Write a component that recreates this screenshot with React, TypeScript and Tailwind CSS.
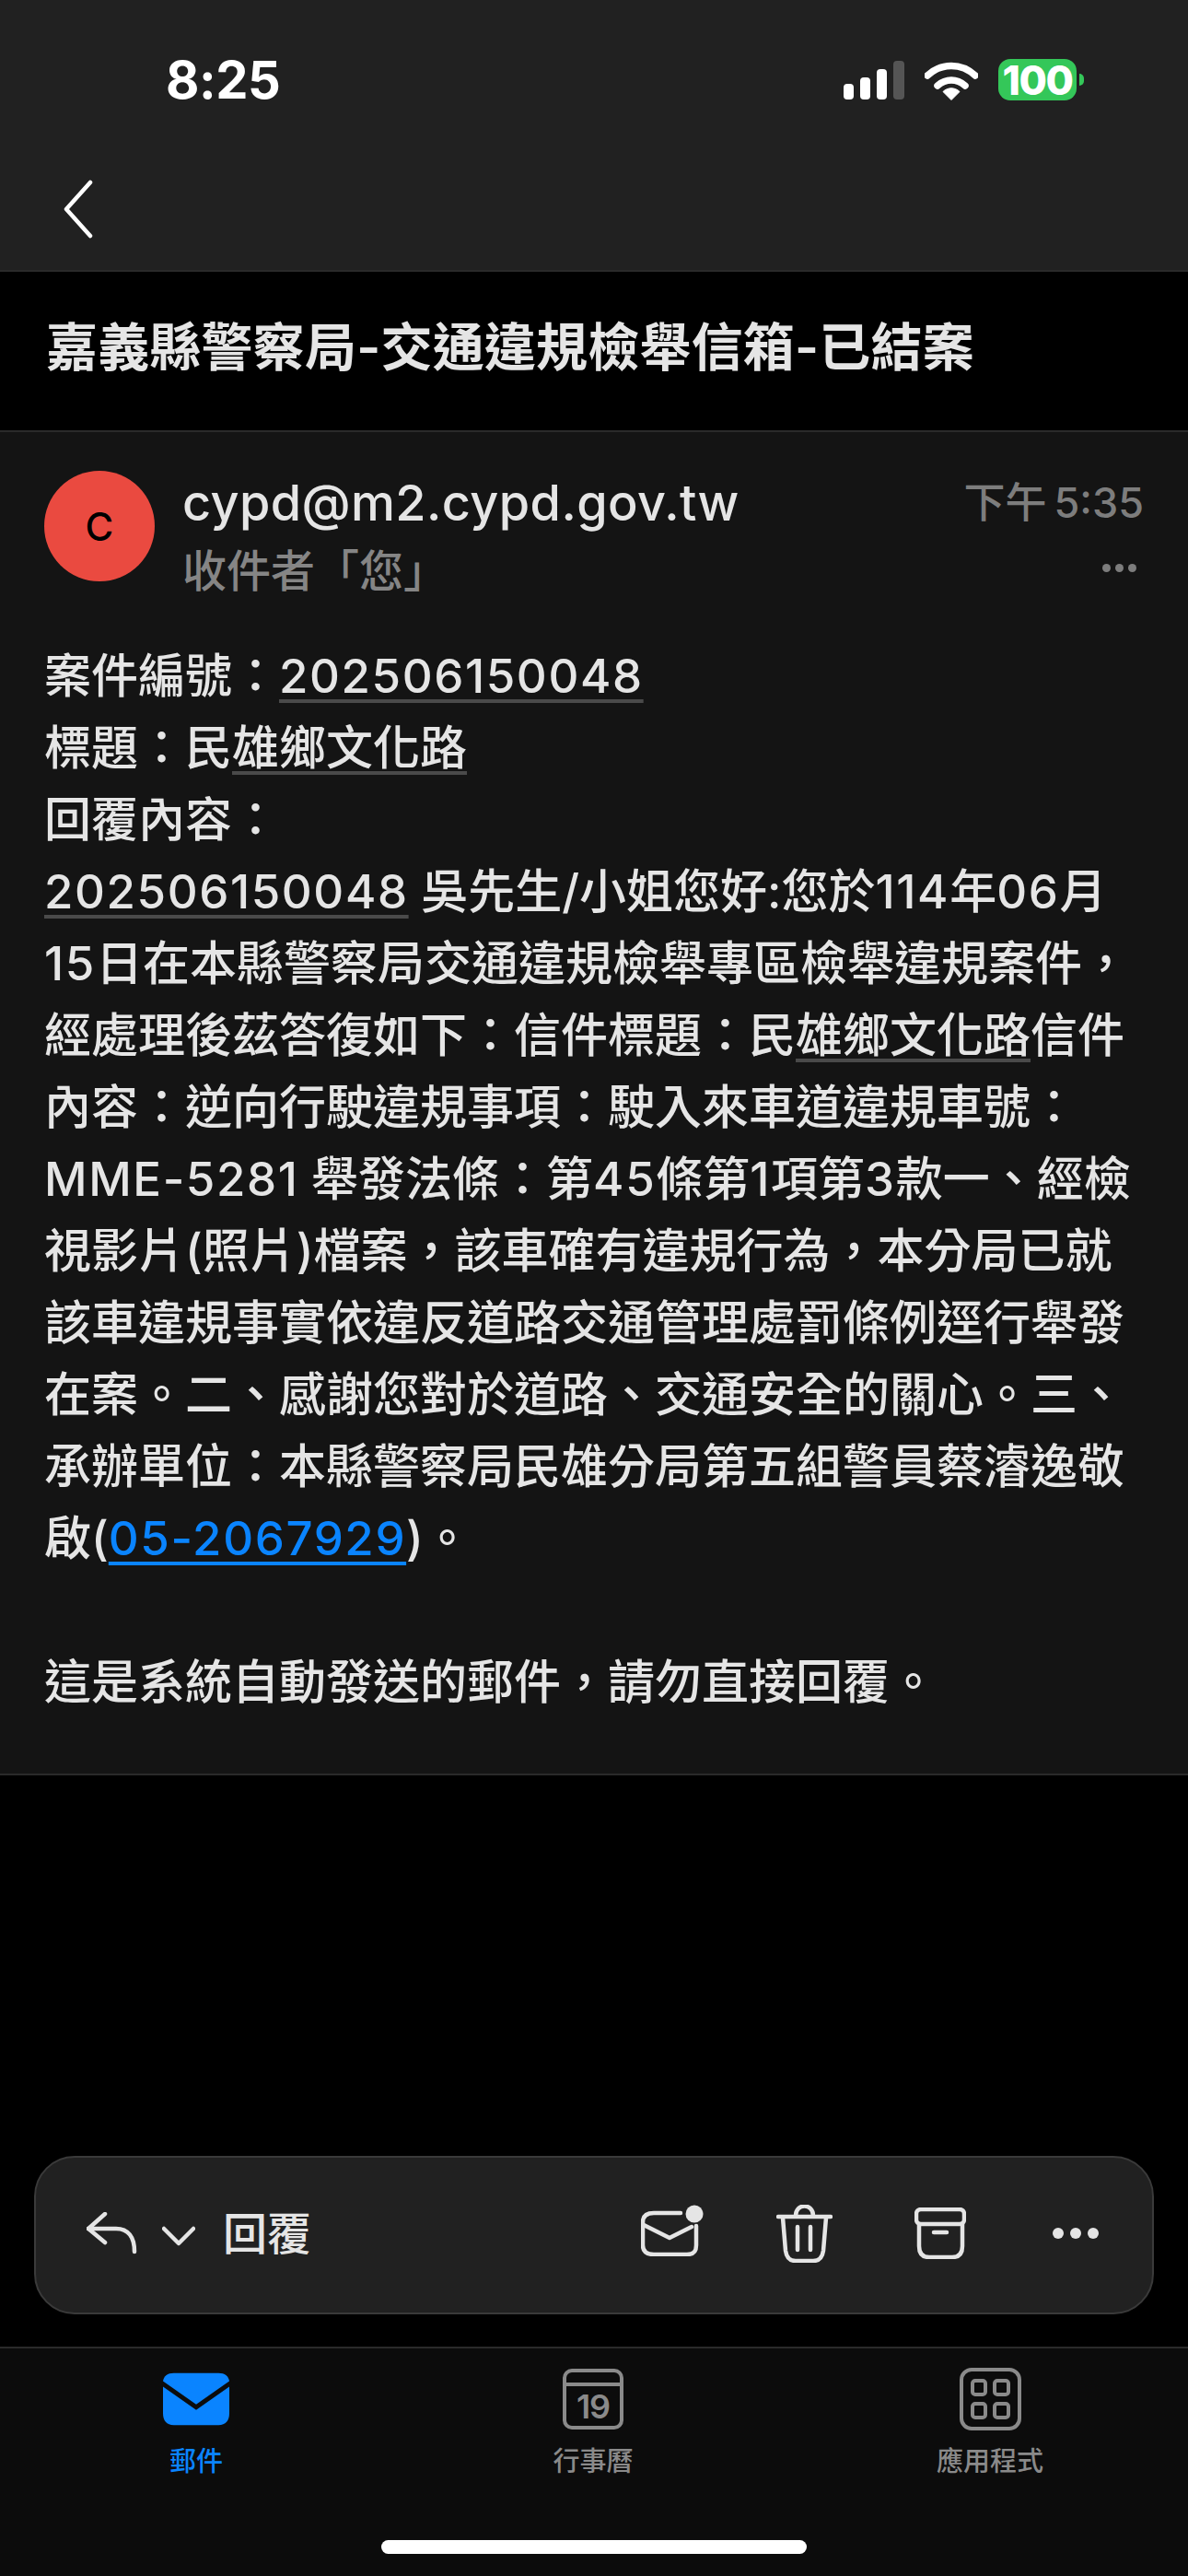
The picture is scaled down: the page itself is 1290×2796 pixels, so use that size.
const cjk = "font-['Inter','Noto_Sans_CJK_TC',sans-serif]";

const underlined = "underline decoration-[#4a4a4a] decoration-[4px] underline-offset-[7px] [text-decoration-skip-ink:none]";

// digits in the reference run wider than Inter
function Num({ children }: { children: React.ReactNode }) {
  return <span className="tracking-[1.6px]">{children}</span>;
}

function StatusIcons() {
  return (
    <div className="flex items-center">
      <svg width="66" height="42" viewBox="0 0 66 42" className="mr-[22px]">
        <rect x="0" y="25" width="11" height="17" rx="4" fill="#fff" />
        <rect x="18" y="18" width="11" height="24" rx="4" fill="#fff" />
        <rect x="36" y="9" width="11" height="33" rx="4" fill="#fff" />
        <rect x="54" y="0" width="12" height="42" rx="4" fill="#555" />
      </svg>
      <svg width="58" height="44" viewBox="0 0 58 44" className="mr-[22px]">
        <path d="M3 17C18 3 40 3 55 17" fill="none" stroke="#fff" strokeWidth="7.5" strokeLinecap="round" />
        <path d="M14 28C23 20 35 20 44 28" fill="none" stroke="#fff" strokeWidth="7.5" strokeLinecap="round" />
        <path d="M20 34.5C25 29.5 33 29.5 38 34.5L29 43.5Z" fill="#fff" stroke="#fff" strokeWidth="1" strokeLinejoin="round" />
      </svg>
      <div className="flex items-center">
        <div className="flex h-[45px] w-[85px] items-center justify-center rounded-[13px] bg-[#34c759] font-['Inter',sans-serif] text-[44px] font-extrabold tracking-[-1.5px] text-white">
          100
        </div>
        <div className="ml-[3px] h-[13px] w-[5px] rounded-r-full bg-[#34c759]" />
      </div>
    </div>
  );
}

function ToolbarIcons() {
  return (
    <div className="flex items-center">
      {/* unread */}
      <svg width="68" height="56" viewBox="0 0 68 56" fill="none" stroke="#e5e5e5" strokeWidth="4.5" strokeLinecap="round" strokeLinejoin="round" className="-mt-[6px] mr-[79px]">
        <path d="M43 9H14C6 9 2 12 2 19V44C2 51 6 54 14 54H50C57 54 60 51 60 44V23" />
        <path d="M3 22L31 36L55 24" />
        <circle cx="58" cy="10" r="9.5" fill="#e5e5e5" stroke="none" />
      </svg>
      {/* delete */}
      <svg width="61" height="63" viewBox="0 0 61 63" fill="none" stroke="#e5e5e5" strokeWidth="4.5" strokeLinecap="round" strokeLinejoin="round" className="mr-[89px]">
        <path d="M2 13H59" />
        <path d="M21 12C21 -2 40 -2 40 12" />
        <path d="M7 14L10 50C11 57 14 61 21 61H40C47 61 50 57 51 50L54 14" />
        <path d="M23 24V49M37 24V49" />
      </svg>
      {/* archive */}
      <svg width="56" height="56" viewBox="0 0 56 56" fill="none" stroke="#e5e5e5" strokeWidth="4.5" strokeLinecap="round" strokeLinejoin="round" className="mr-[94px]">
        <rect x="2" y="2" width="52" height="16" rx="5" />
        <path d="M5 18V42C5 50 9 54 16 54H41C48 54 52 50 52 42V18" />
        <path d="M21 27H35" />
      </svg>
      {/* more */}
      <div className="flex items-center gap-[7px]">
        <div className="size-[12px] rounded-full bg-[#e5e5e5]" />
        <div className="size-[12px] rounded-full bg-[#e5e5e5]" />
        <div className="size-[12px] rounded-full bg-[#e5e5e5]" />
      </div>
    </div>
  );
}

function MailTab() {
  return (
    <svg width="72" height="58" viewBox="0 0 74 58">
      <path d="M12 0H62C69 0 73 3 74 9L37 35L0 9C1 3 5 0 12 0Z" fill="#0a84ff" />
      <path d="M0 15L37 41L74 15V45C74 53 70 58 62 58H12C4 58 0 53 0 45Z" fill="#0a84ff" />
    </svg>
  );
}

function CalendarTab() {
  return (
    <div className="flex h-[66px] w-[66px] flex-col rounded-[10px] border-[4px] border-[#8a8a8a]">
      <div className="h-[15px] shrink-0 border-b-[4px] border-[#8a8a8a]" />
      <div className="flex flex-1 items-center justify-center font-['Inter',sans-serif] text-[36px] leading-none font-semibold tracking-[-1px] text-[#8a8a8a]">
        19
      </div>
    </div>
  );
}

function AppsTab() {
  return (
    <div className="grid h-[68px] w-[67px] grid-cols-2 gap-[6px] rounded-[13px] border-[4px] border-[#8a8a8a] p-[8px]">
      <div className="rounded-[5px] border-[4px] border-[#8a8a8a]" />
      <div className="rounded-[5px] border-[4px] border-[#8a8a8a]" />
      <div className="rounded-[5px] border-[4px] border-[#8a8a8a]" />
      <div className="rounded-[5px] border-[4px] border-[#8a8a8a]" />
    </div>
  );
}

export default function App() {
  return (
    <div className={`flex h-[2796px] w-[1290px] flex-col overflow-hidden bg-black ${cjk}`}>
      {/* status + nav */}
      <header className="h-[295px] shrink-0 border-b-[2px] border-[#2a2a2a] bg-[#212121]">
        <div className="flex items-start justify-between pt-[64px] pr-[113px] pl-[180px]">
          <div className="font-['Inter',sans-serif] text-[56px] leading-[46px] font-bold tracking-[-0.5px] text-white">8:25</div>
          <StatusIcons />
        </div>
        <svg width="34" height="64" viewBox="0 0 34 64" fill="none" stroke="#fff" strokeWidth="4.5" strokeLinecap="round" strokeLinejoin="round" className="mt-[85px] ml-[68px]">
          <path d="M30 3L4 32L30 61" />
        </svg>
      </header>

      <h1 className="flex h-[172px] shrink-0 items-center px-[50px] pb-[8px] text-[56px] font-semibold tracking-[0.2px] text-[#e5e5e5]">
        嘉義縣警察局-交通違規檢舉信箱-已結案
      </h1>

      {/* message */}
      <section className="h-[1460px] shrink-0 border-y-[2px] border-[#2a2a2a] bg-[#141414] px-[48px]">
        <div className="flex pt-[42px]">
          <div className="flex size-[120px] shrink-0 items-center justify-center rounded-full bg-[#ea4a40] text-[42px] font-medium text-black">
            C
          </div>
          <div className="ml-[30px] flex-1">
            <div className="text-[54px] leading-[70px] font-medium tracking-[0.4px] text-[#e5e5e5]">cypd@m2.cypd.gov.tw</div>
            <div className="mt-[3px] text-[48px] leading-[72px] font-medium text-[#858585]">收件者「您」</div>
          </div>
          <div className="flex flex-col items-end">
            <div className="text-[45px] leading-[70px] font-medium [word-spacing:-4px] text-[#7d7d7d]">下午 5:35</div>
            <div className="mt-[31px] mr-[8px] flex gap-[5px]">
              <div className="size-[9px] rounded-full bg-[#7d7d7d]" />
              <div className="size-[9px] rounded-full bg-[#7d7d7d]" />
              <div className="size-[9px] rounded-full bg-[#7d7d7d]" />
            </div>
          </div>
        </div>

        <div className="mt-[39px] text-[51px] leading-[78px] font-medium whitespace-nowrap text-[#e5e5e5]">
          案件編號：<span className={underlined}><Num>202506150048</Num></span>
          <br />
          標題：民<span className={underlined}>雄鄉文化路</span>
          <br />
          回覆內容：
          <br />
          <span className={underlined}><Num>202506150048</Num></span> 吳先生/小姐您好:您於<Num>114</Num>年<Num>06</Num>月
          <br />
          <Num>15</Num>日在本縣警察局交通違規檢舉專區檢舉違規案件，
          <br />
          經處理後茲答復如下：信件標題：民<span className={underlined}>雄鄉文化路</span>信件
          <br />
          內容：逆向行駛違規事項：駛入來車道違規車號：
          <br />
          <Num>MME-5281</Num> 舉發法條：第<Num>45</Num>條第<Num>1</Num>項第<Num>3</Num>款一、經檢
          <br />
          視影片(照片)檔案，該車確有違規行為，本分局已就
          <br />
          該車違規事實依違反道路交通管理處罰條例逕行舉發
          <br />
          在案。二、感謝您對於道路、交通安全的關心。三、
          <br />
          承辦單位：本縣警察局民雄分局第五組警員蔡濬逸敬
          <br />
          啟(
          <span className="text-[#0a84ff] underline decoration-[#0a84ff] decoration-[4px] underline-offset-[7px] [text-decoration-skip-ink:none]">
            <Num>05-2067929</Num>
          </span>
          )。
          <br />
          <br />
          這是系統自動發送的郵件，請勿直接回覆。
        </div>
      </section>

      <div className="flex-1" />

      {/* action toolbar */}
      <div className="mx-[37px] flex h-[172px] shrink-0 items-center justify-between rounded-[44px] border-[2px] border-[#3a3a3a] bg-[#212121] pr-[58px] pb-[4px] pl-[55px]">
        <div className="flex items-center text-[#e5e5e5]">
          <svg width="56" height="46" viewBox="0 0 56 46" fill="none" stroke="#e5e5e5" strokeWidth="4.5" strokeLinecap="round" strokeLinejoin="round">
            <path d="M20 2L2 18L20 33" />
            <path d="M2 18H32C45 18 52 27 52 43" />
          </svg>
          <svg width="36" height="22" viewBox="0 0 36 22" fill="none" stroke="#e5e5e5" strokeWidth="4.5" strokeLinecap="round" strokeLinejoin="round" className="mt-[6px] ml-[26px]">
            <path d="M2 3L18 19L34 3" />
          </svg>
          <span className="mt-[2px] ml-[30px] text-[48px] font-medium">回覆</span>
        </div>
        <ToolbarIcons />
      </div>

      {/* tab bar */}
      <nav className="relative mt-[35px] h-[249px] shrink-0 border-t-[2px] border-[#2a2a2a] bg-[#0c0c0c]">
        <div className="grid grid-cols-[426px_436px_426px] pt-[19px]">
          <div className="flex flex-col items-center text-[#0a84ff]">
            <div className="flex h-[72px] items-center">
              <MailTab />
            </div>
            <span className="mt-[12px] text-[29px] leading-[40px] font-medium">郵件</span>
          </div>
          <div className="flex flex-col items-center text-[#8a8a8a]">
            <div className="flex h-[72px] items-center">
              <CalendarTab />
            </div>
            <span className="mt-[12px] text-[29px] leading-[40px] font-medium">行事曆</span>
          </div>
          <div className="flex flex-col items-center text-[#8a8a8a]">
            <div className="flex h-[72px] items-center">
              <AppsTab />
            </div>
            <span className="mt-[12px] text-[29px] leading-[40px] font-medium">應用程式</span>
          </div>
        </div>
        {/* home indicator */}
        <div className="absolute bottom-[24px] left-[414px] h-[15px] w-[462px] rounded-full bg-white" />
      </nav>
    </div>
  );
}
